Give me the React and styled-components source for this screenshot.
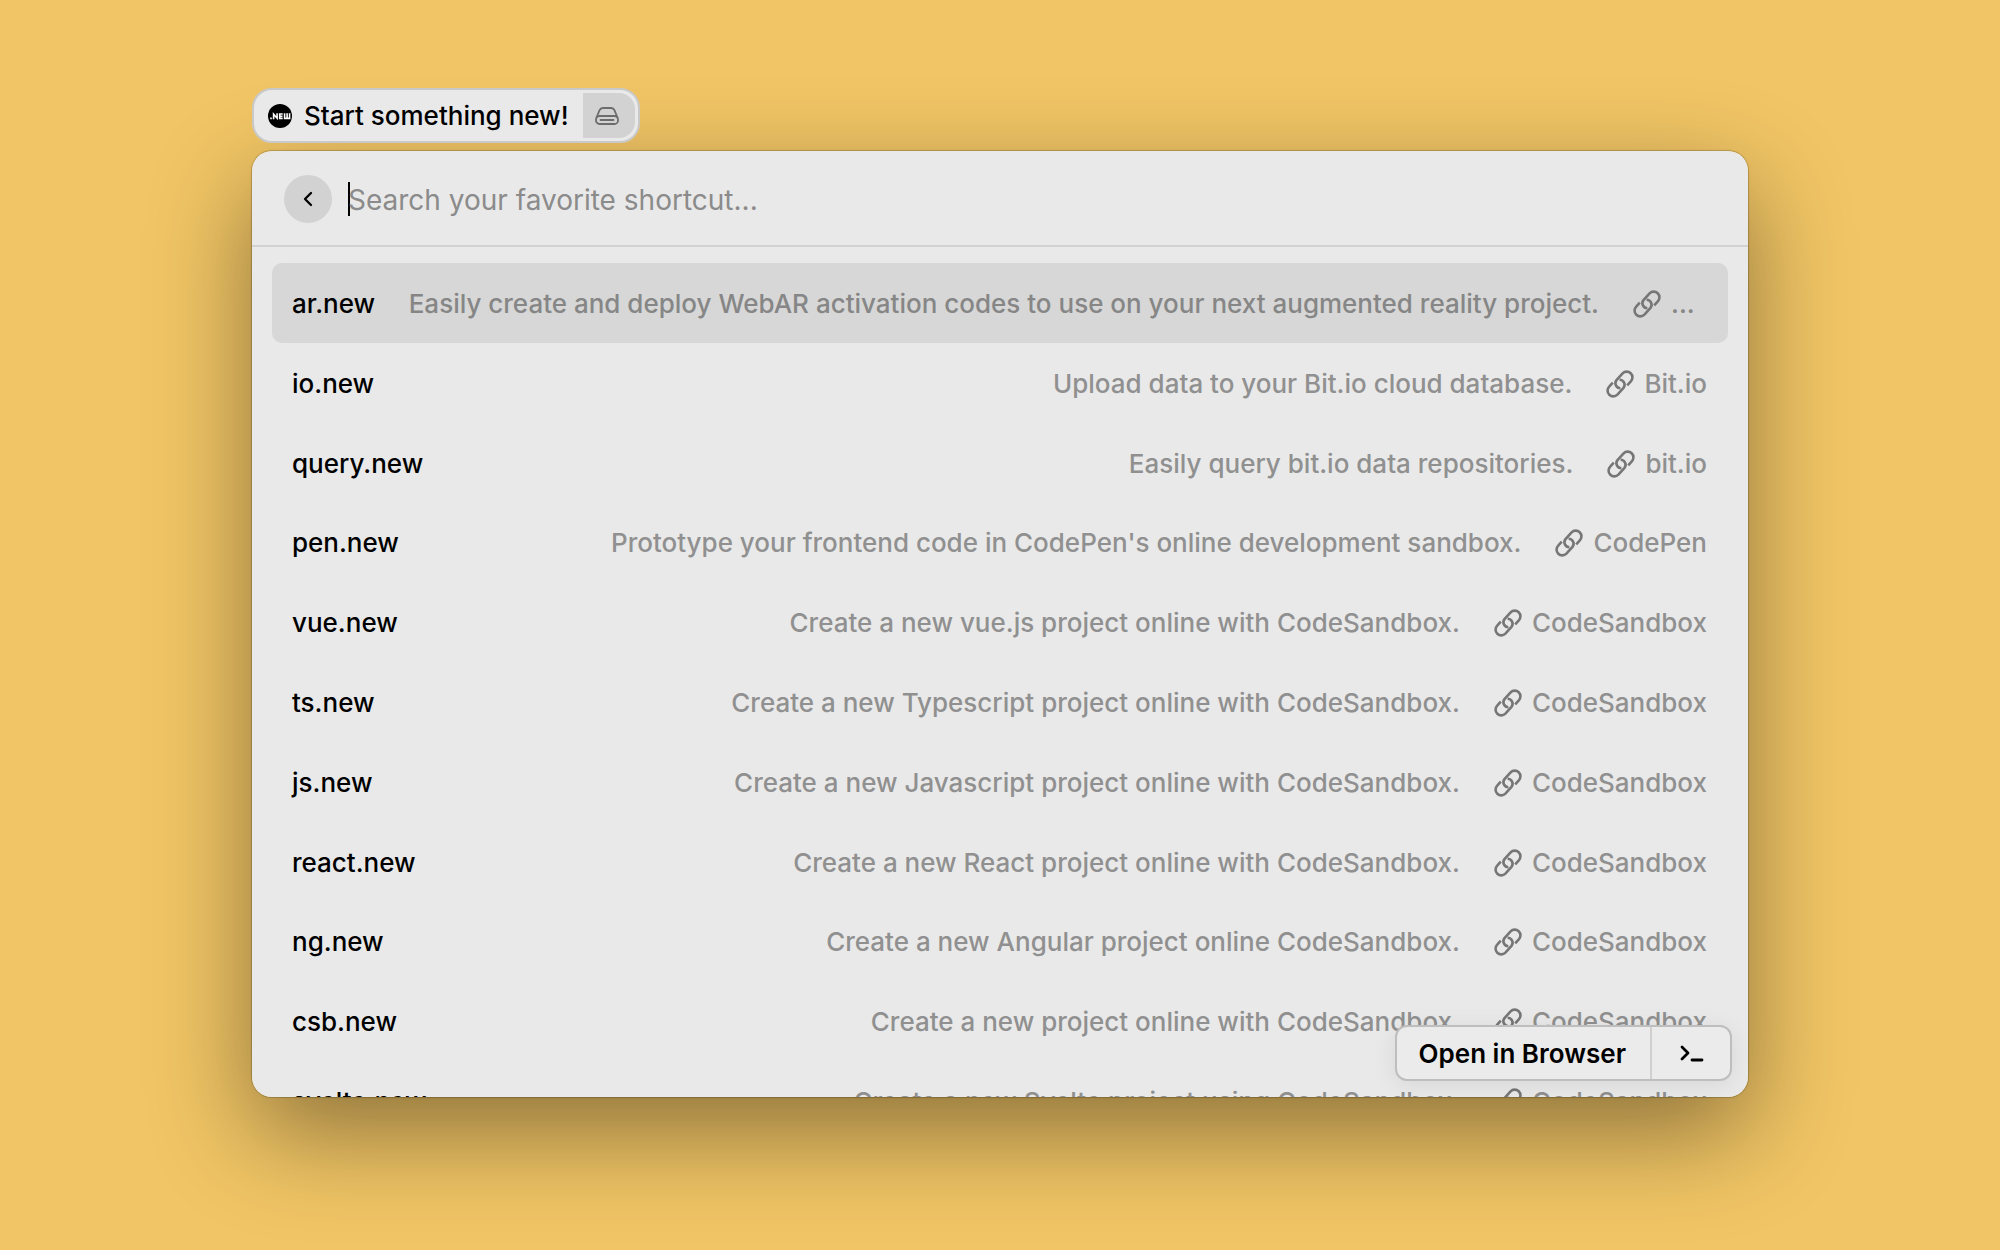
import React from "react";
import styled, { createGlobalStyle } from "styled-components";

const Global = createGlobalStyle`
  * { box-sizing: border-box; }
  html, body, #root { margin: 0; min-height: 100vh; }
  body { background: #f1c565; font-family: Inter, "Liberation Sans", sans-serif; color: #000; }
  button, input { font: inherit; color: inherit; }
`;

const Desktop = styled.main`
  min-height: 100vh;
  display: flex;
  flex-direction: column;
  align-items: stretch;
  gap: 8px;
  padding: 88px 252px 153px;
`;

const Chip = styled.div`
  position: relative;
  z-index: 1;
  align-self: flex-start;
  display: flex;
  align-items: center;
  height: 55px;
  padding: 3px;
  border: 2px solid #c9c9ca;
  border-radius: 20px;
  background: #e9e9e9;
`;

const ChipLabel = styled.span`
  display: flex;
  align-items: center;
  gap: 12px;
  padding: 0 14px 0 11px;
  font-size: 26px;
  line-height: 32px;
  font-weight: 500;
  white-space: nowrap;
`;

const ChipAction = styled.button`
  align-self: stretch;
  width: 52px;
  display: grid;
  place-items: center;
  padding: 0 4px 0 0;
  border: 0;
  border-radius: 0 16px 16px 0;
  background: #d2d2d2;
`;

const Shadow = styled.div`
  flex: 1 1 0;
  min-height: 0;
  display: flex;
  flex-direction: column;
  border-radius: 20px;
  box-shadow: 0 0 1px 1px rgba(0, 0, 0, 0.2), 0 36px 100px rgba(0, 0, 0, 0.42);
`;

const Panel = styled.section`
  position: relative;
  flex: 1 1 0;
  min-height: 0;
  display: flex;
  flex-direction: column;
  overflow: hidden;
  border-radius: 20px;
  background: #e9e9e9;
`;

const Header = styled.header`
  flex: none;
  height: 96px;
  display: flex;
  align-items: center;
  gap: 16px;
  padding: 2px 32px 0;
  border-bottom: 2px solid #d2d2d2;
`;

const BackButton = styled.button`
  width: 48px;
  height: 48px;
  display: grid;
  place-items: center;
  padding: 0;
  border: 0;
  border-radius: 50%;
  background: #d2d2d2;
`;

const Search = styled.input`
  flex: 1;
  min-width: 0;
  height: 48px;
  padding: 2px 0 0;
  border: 0;
  outline: 0;
  background: none;
  font-size: 28px;
  caret-color: transparent;
  &::placeholder { color: #8b8b8b; opacity: 1; }
`;

const Field = styled.label`
  flex: 1;
  display: flex;
  align-items: center;
`;

const Caret = styled.span`
  width: 2px;
  height: 34px;
  margin-right: -2px;
  background: #000;
`;

const List = styled.ul`
  flex: none;
  display: grid;
  grid-template-rows: repeat(11, 1fr);
  height: 878px;
  margin: 16px 20px 0;
  padding: 0;
  list-style: none;
`;

const Row = styled.li`
  display: flex;
  align-items: center;
  padding: 2px 21px 0 20px;
  border-radius: 10px;
  background: ${(p) => (p.$selected ? "#d7d7d7" : "transparent")};
  color: ${(p) => (p.$selected ? "#868686" : "#909090")};
  font-size: 26px;
  line-height: 32px;
  font-weight: 500;
  white-space: nowrap;
`;

const Name = styled.span`
  flex: none;
  margin-right: auto;
  color: #000;
`;

const Description = styled.span`
  flex: none;
  margin: 0 34px 0 28px;
`;

const Source = styled.a`
  flex: none;
  min-width: 74px;
  display: flex;
  align-items: center;
  gap: 10px;
  color: inherit;
  text-decoration: none;
`;

const Actions = styled.div`
  position: absolute;
  right: 16px;
  bottom: 16px;
  display: flex;
  height: 56px;
  border: 2px solid #bebebe;
  border-radius: 12px;
  background: #ebebeb;
  box-shadow: 0 4px 24px rgba(0, 0, 0, 0.08);
`;

const ActionButton = styled.button`
  display: grid;
  place-items: center;
  padding: ${(p) => (p.$divided ? "0 26px 0 28px" : "2px 24px 0 22px")};
  border: 0;
  border-left: ${(p) => (p.$divided ? "2px solid #d0d0d0" : "0")};
  background: none;
  font-size: 26px;
  line-height: 32px;
  font-weight: 600;
`;

const LinkSvg = styled.svg`
  flex: none;
  width: 28px;
  height: 28px;
  fill: none;
  stroke: #767676;
  stroke-width: 2.6;
`;

const LinkIcon = () => (
  <LinkSvg viewBox="0 0 28 28" aria-hidden="true">
    <path d="M14.4 18.2a5 5 0 0 1-3.900-8.100l6.100-6.700a5.700 5.700 0 0 1 8.200 8l-3.600 4" />
    <path d="M13.600 9.800a5 5 0 0 1 3.900 8.100l-6.100 6.700a5.700 5.700 0 0 1-8.200-8l3.600-4" />
  </LinkSvg>
);

const NewBadge = () => (
  <svg width="24" height="24" viewBox="0 0 24 24" aria-hidden="true">
    <circle cx="12" cy="12" r="12" fill="#000" />
    <g fill="none" stroke="#fff" strokeWidth="1.6">
      <path d="M2.200 14.400h1.600" />
      <path d="M5.600 15.200V10.200l3.500 4V9.200" />
      <path d="M14.700 10h-3v4.400h3M11.700 12.200h2.800" />
      <path d="M16.600 9.200v5.200h5V9.200M19.100 9.200v5.200" />
    </g>
  </svg>
);

const DriveIcon = () => (
  <svg width="24" height="18" viewBox="0 0 24 18" fill="none" stroke="#6c6c6c" strokeWidth="1.8" strokeLinejoin="round" aria-hidden="true">
    <path d="M1.300 11 4.600 3.200a3.500 3.500 0 0 1 3.200-2.200h8.400a3.500 3.500 0 0 1 3.200 2.200l3.300 7.800" />
    <rect x="1" y="9" width="22" height="8" rx="3.500" />
    <path d="M5.500 13h13" strokeLinecap="round" />
  </svg>
);

const shortcuts = [
  ["ar.new", "Easily create and deploy WebAR activation codes to use on your next augmented reality project.", "..."],
  ["io.new", "Upload data to your Bit.io cloud database.", "Bit.io"],
  ["query.new", "Easily query bit.io data repositories.", "bit.io"],
  ["pen.new", "Prototype your frontend code in CodePen's online development sandbox.", "CodePen"],
  ["vue.new", "Create a new vue.js project online with CodeSandbox.", "CodeSandbox"],
  ["ts.new", "Create a new Typescript project online with CodeSandbox.", "CodeSandbox"],
  ["js.new", "Create a new Javascript project online with CodeSandbox.", "CodeSandbox"],
  ["react.new", "Create a new React project online with CodeSandbox.", "CodeSandbox"],
  ["ng.new", "Create a new Angular project online CodeSandbox.", "CodeSandbox"],
  ["csb.new", "Create a new project online with CodeSandbox.", "CodeSandbox"],
  ["svelte.new", "Create a new Svelte project using CodeSandbox.", "CodeSandbox"],
];

export default function App() {
  return (
    <Desktop>
      <Global />
      <Chip>
        <ChipLabel><NewBadge />Start something new!</ChipLabel>
        <ChipAction aria-label="Extension"><DriveIcon /></ChipAction>
      </Chip>
      <Shadow>
        <Panel>
          <Header>
            <BackButton aria-label="Back">
              <svg width="10" height="16" viewBox="0 0 10 16" fill="none" stroke="#000" strokeWidth="2.3" strokeLinecap="round" strokeLinejoin="round">
                <path d="M8 2 2 8l6 6" />
              </svg>
            </BackButton>
            <Field>
              <Caret />
              <Search aria-label="Search shortcuts" placeholder="Search your favorite shortcut..." />
            </Field>
          </Header>
          <List>
            {shortcuts.map(([name, description, source], i) => (
              <Row key={name} $selected={i === 0}>
                <Name>{name}</Name>
                <Description>{description}</Description>
                <Source href={`https://${name}`}>
                  <LinkIcon />
                  {source}
                </Source>
              </Row>
            ))}
          </List>
          <Actions>
            <ActionButton>Open in Browser</ActionButton>
            <ActionButton $divided aria-label="More actions">
              <svg width="24" height="18" viewBox="0 0 24 18" fill="none" stroke="#000" strokeWidth="2.8" strokeLinecap="round" strokeLinejoin="round">
                <path d="M2 3l6 6-6 6M12 16h10" />
              </svg>
            </ActionButton>
          </Actions>
        </Panel>
      </Shadow>
    </Desktop>
  );
}
